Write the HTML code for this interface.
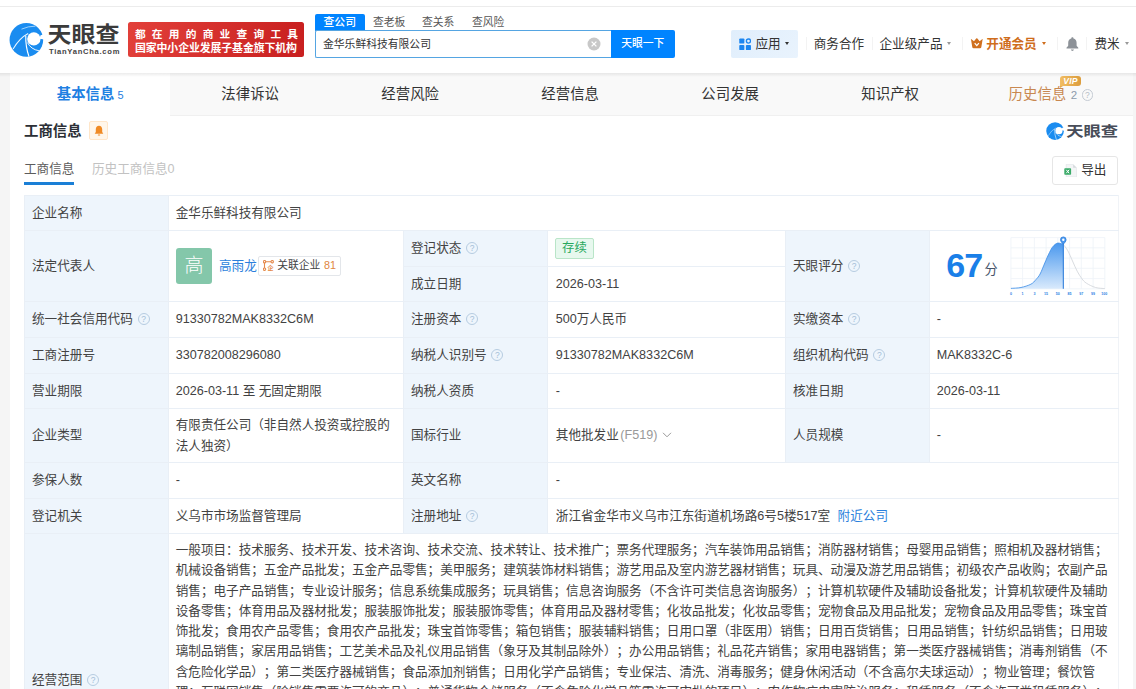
<!DOCTYPE html>
<html lang="zh-CN">
<head>
<meta charset="utf-8">
<title>金华乐鲜科技有限公司 - 天眼查</title>
<style>
*{box-sizing:border-box;margin:0;padding:0}
html,body{width:1136px;height:689px;overflow:hidden;background:#f5f5f5;}
body{position:relative;text-spacing-trim:space-all;font-family:"Liberation Sans","Noto Sans CJK SC",sans-serif;color:#333;font-size:12.6px;}
.abs{position:absolute;white-space:nowrap}
#hdr{position:absolute;left:0;top:0;width:1136px;height:73px;background:#fff;}
#topline{position:absolute;left:0;top:6px;width:1136px;height:1px;background:#ececec}
#hshadow{position:absolute;left:0;top:72.500px;width:1136px;height:4px;background:linear-gradient(rgba(0,0,0,.075),rgba(0,0,0,0));z-index:5}
#card{position:absolute;left:10px;top:73px;width:1122.5px;height:640px;background:#fff}
#tabs{position:absolute;left:0;top:0;width:1122.5px;height:43px;background:#f9f9f9;border-bottom:1px solid #f0f0f0}
.tab{position:absolute;top:0;height:43px;width:160.3px;text-align:center;line-height:43px;font-size:14.4px;color:#333}
.tab.on{background:#fff;color:#1f80e2;font-weight:bold}
.tab .n{font-size:11px;font-weight:normal;margin-left:3px}
table{border-collapse:collapse;position:absolute;left:24px;top:195px;width:1094px;table-layout:fixed}
td{border:1px solid #e9eff6;padding:0 0 0 6.700px;font-size:12.6px;color:#424242;vertical-align:middle;line-height:20.3px;white-space:nowrap}
td.l{background:#eef5fc;padding-left:7px}
.q{display:inline-block;width:12px;height:12px;border:1px solid #b6cce1;border-radius:50%;color:#a3bdd7;font-size:8.500px;line-height:10.200px;text-align:center;vertical-align:middle;margin-left:4.800px;position:relative;top:-1px;font-family:"Liberation Sans",sans-serif}
.blue{color:#2b7fdc}
td.v4{padding-left:7.800px}
tr>td:last-child{border-right-color:#f0f3f7}
.nv{top:33.500px;font-size:12.600px;line-height:20px;color:#333}
.sep{top:37px;width:1px;height:13px;background:#f3f3f3}
.car{top:42px;width:0;height:0;border:2.500px solid transparent;border-top:3px solid #999;border-bottom:none}
</style>
</head>
<body>
<div id="hdr">
  <div id="topline"></div>
  <!-- logo -->
  <svg class="abs" style="left:4px;top:16px" width="50" height="46" viewBox="0 0 749 689">
    <circle cx="335" cy="358" r="252" fill="#1a8cf0"/>
    <circle cx="447" cy="343" r="100" fill="#fff"/>
    <path d="M548 288 L650 262 L604 352 L530 340 Z" fill="#fff"/>
    <path d="M262 197 Q360 152 472 152" stroke="#cfeaff" stroke-width="11" fill="none"/>
    <path d="M362 262 Q232 330 136 494" stroke="#eaf6ff" stroke-width="15" fill="none"/>
    <path d="M326 296 Q322 460 374 606" stroke="#fff" stroke-width="17" fill="none"/>
    <path d="M352 398 Q402 500 528 522" stroke="#fff" stroke-width="14" fill="none"/>
  </svg>
  <div class="abs" style="left:47.5px;top:17.2px;font-size:24px;font-weight:bold;color:#3b3b3b;line-height:32px;transform:scaleY(.9);transform-origin:0 50%;font-family:'Noto Sans CJK SC',sans-serif">天眼查</div>
  <div class="abs" style="left:49px;top:47px;font-size:7.6px;font-weight:bold;color:#444;line-height:10px;letter-spacing:.72px;font-family:'Liberation Sans',sans-serif">TianYanCha.com</div>
  <!-- red banner -->
  <div class="abs" style="left:127.900px;top:21.500px;width:176.600px;height:35.600px;border-radius:2.500px;background:linear-gradient(100deg,#e2403a,#c81f1f);color:#fff;font-weight:bold;">
    <div class="abs" style="left:7px;top:5.400px;font-size:10.700px;line-height:14px;letter-spacing:6.250px">都在用的商业查询工具</div>
    <div class="abs" style="left:7.100px;top:19.500px;font-size:10.9px;line-height:14px;letter-spacing:-.1px">国家中小企业发展子基金旗下机构</div>
  </div>
  <!-- search -->
  <div class="abs" style="left:315px;top:14px;width:49.5px;height:17px;background:#0084ff;border-radius:2px 2px 0 0;color:#fff;font-size:10.8px;line-height:16px;text-align:center;font-weight:500">查公司</div>
  <div class="abs" style="left:373px;top:14px;font-size:10.8px;line-height:16px;color:#555">查老板</div>
  <div class="abs" style="left:422px;top:14px;font-size:10.8px;line-height:16px;color:#555">查关系</div>
  <div class="abs" style="left:472px;top:14px;font-size:10.8px;line-height:16px;color:#555">查风险</div>
  <div class="abs" style="left:315px;top:30px;width:296px;height:27.5px;border:1px solid #55a5e2;border-right:none;border-radius:2px 0 0 2px;background:#fff;font-size:10.8px;line-height:27px;padding-left:7px;color:#333">金华乐鲜科技有限公司</div>
  <svg class="abs" style="left:586.5px;top:36.8px" width="14" height="14" viewBox="0 0 14 14"><circle cx="7" cy="7" r="6.5" fill="#c8c8c8"/><path d="M4.6 4.6L9.4 9.4M9.4 4.6L4.6 9.4" stroke="#fff" stroke-width="1.3"/></svg>
  <div class="abs" style="left:610.5px;top:30px;width:64.5px;height:27.5px;background:#0084ff;border-radius:0 2px 2px 0;color:#fff;font-size:10.8px;line-height:27.5px;text-align:center;font-weight:500">天眼一下</div>
  <!-- nav -->
  <div class="abs" style="left:730.5px;top:29.5px;width:67.5px;height:28.5px;background:linear-gradient(135deg,#e0eefc,#e9f3fd);border-radius:2px"></div>
  <svg class="abs" style="left:738.5px;top:38px" width="12.5" height="12.5" viewBox="0 0 14 14"><rect x="0.3" y="0.5" width="5.7" height="5.7" rx="1" fill="#1a85f0"/><circle cx="10.6" cy="3.4" r="2.3" fill="none" stroke="#1a85f0" stroke-width="1.5"/><rect x="0.3" y="7.8" width="5.7" height="5.700" rx="1" fill="#1a85f0"/><rect x="7.700" y="7.800" width="5.700" height="5.700" rx="1" fill="#1a85f0"/></svg>
  <div class="abs nv" style="left:755.5px">应用</div>
  <div class="abs car" style="left:785px;border-top-color:#333"></div>
  <div class="abs sep" style="left:805.5px"></div>
  <div class="abs nv" style="left:813.7px">商务合作</div>
  <div class="abs sep" style="left:871.5px"></div>
  <div class="abs nv" style="left:879.5px">企业级产品</div>
  <div class="abs car" style="left:947px"></div>
  <div class="abs sep" style="left:961.5px"></div>
  <svg class="abs" style="left:969.8px;top:38px" width="13.6" height="10.6" viewBox="0 0 13.6 10.6"><path d="M1 1.600Q.6.800 1.500 1.300L4 3.300L6.200.6Q6.800-.1 7.400.6L9.600 3.300L12.100 1.300Q13 .8 12.600 1.600L11.300 9.300Q11.100 10.300 10 10.300H3.600Q2.500 10.300 2.300 9.300Z" fill="#d0701f"/><path d="M4.700 5.200L6.800 7.600L8.900 5.200" fill="none" stroke="#fff" stroke-width="1.300"/></svg>
  <div class="abs nv" style="left:986.3px;color:#cf6d1c;font-weight:bold">开通会员</div>
  <div class="abs car" style="left:1041.7px;border-top-color:#cf6d1c"></div>
  <div class="abs sep" style="left:1057.4px"></div>
  <svg class="abs" style="left:1066px;top:36.500px" width="12.800" height="14.200" viewBox="0 0 12.800 14.200"><path d="M6.400 .3C5.700 .3 5.300 .8 5.300 1.400C3.300 1.900 2.200 3.600 2.200 5.700V8.600C2.200 9.500 1.200 10 .5 10.700V11.500H12.300V10.700C11.600 10 10.600 9.500 10.600 8.600V5.700C10.600 3.600 9.500 1.900 7.500 1.400C7.500 .8 7.100 .3 6.400 .3Z" fill="#8d9298"/><path d="M4.800 12.500H8Q7.600 13.900 6.400 13.900Q5.200 13.900 4.800 12.500Z" fill="#8d9298"/></svg>
  <div class="abs sep" style="left:1086.400px"></div>
  <div class="abs nv" style="left:1094.400px">费米</div>
  <div class="abs car" style="left:1125px"></div>
</div>
<div id="hshadow"></div>
<div id="card">
  <div id="tabs">
    <div class="tab on" style="left:0">基本信息<span class="n">5</span></div>
    <div class="tab" style="left:160px">法律诉讼</div>
    <div class="tab" style="left:320px">经营风险</div>
    <div class="tab" style="left:480px">经营信息</div>
    <div class="tab" style="left:640px">公司发展</div>
    <div class="tab" style="left:800px">知识产权</div>
    <div class="tab" style="left:960px;color:#c88850;text-align:left;padding-left:38.600px">历史信息<span class="n" style="color:#8d9bab;margin-left:4.500px;font-size:11.500px">2</span><span class="q" style="width:11.700px;height:11.700px;line-height:10px;font-size:8.500px;border-color:#c4cbd3;color:#b5bdc6;margin-left:4.500px;top:-.5px">?</span>
      <div class="abs" style="left:89.900px;top:2.500px;width:21.200px;height:10.200px;border-radius:3px 3px 3px 0;background:linear-gradient(90deg,#f2bd62,#dc9d3e);color:#fff;font-size:8.600px;line-height:10.200px;font-weight:bold;font-style:italic;text-align:center;font-family:'Liberation Sans',sans-serif;letter-spacing:.2px">VIP</div>
      <div class="abs" style="left:89.900px;top:12.500px;width:0;height:0;border-top:2.500px solid #e5aa4c;border-right:3px solid transparent"></div>
    </div>
  </div>
</div>
<!-- section title -->
<div class="abs" style="left:24px;top:120px;font-size:14.4px;font-weight:bold;line-height:22px;color:#2b2f36">工商信息</div>
<div class="abs" style="left:89px;top:121px;width:19px;height:19px;background:#fff6ea;border:1px solid #ffe6c9;border-radius:2px"></div>
<svg class="abs" style="left:93.500px;top:124.500px" width="10" height="12" viewBox="0 0 10 12"><path d="M5 .8C3 .8 1.800 2.400 1.800 4.300V7L.7 8.800h8.600L8.200 7V4.300C8.200 2.400 7 .8 5 .8Z" fill="#f08a24"/><rect x="3.800" y="9.500" width="2.400" height="1.100" rx=".5" fill="#f08a24"/></svg>
<!-- sub tabs -->
<div class="abs" style="left:24px;top:158.700px;font-size:12.6px;line-height:20px;color:#5c5c5c">工商信息</div>
<div class="abs" style="left:92px;top:158.700px;font-size:12.6px;line-height:20px;color:#c2c2c2">历史工商信息0</div>
<div class="abs" style="left:24px;top:182px;width:50px;height:3px;background:#1a7fd6"></div>
<!-- export -->
<div class="abs" style="left:1052px;top:156px;width:66px;height:28.500px;border:1px solid #e6e6e6;border-radius:3px;background:#fff"></div>
<svg class="abs" style="left:1063.500px;top:163.800px" width="13" height="13.400" viewBox="0 0 13 13.400"><path d="M2.200 .4h7l3.300 3.300v9.300H2.200Z" fill="#f3f5f6" stroke="#dfe3e6" stroke-width=".6"/><path d="M9.200 .4V3.700H12.500Z" fill="#d5dadd"/><rect x=".3" y="4.200" width="6.800" height="6.600" rx=".8" fill="#3aaa68"/><path d="M2.300 5.800L5.100 9.200M5.100 5.800L2.300 9.200" stroke="#fff" stroke-width="1"/></svg>
<div class="abs" style="left:1081.200px;top:160px;font-size:12.6px;line-height:20px;color:#333">导出</div>
<!-- watermark logo -->
<svg class="abs" style="left:1046px;top:122px" width="18.200" height="18.200" viewBox="75 98 520 520">
    <circle cx="335" cy="358" r="252" fill="#1a8cf0"/>
    <circle cx="445" cy="345" r="102" fill="#fff"/>
    <path d="M540 262 L640 250 L600 352 L520 330 Z" fill="#fff"/>
    <path d="M356 268 Q230 330 138 492" stroke="#e6f5ff" stroke-width="14" fill="none"/>
    <path d="M322 300 Q318 460 372 604" stroke="#fff" stroke-width="16" fill="none"/>
    <path d="M350 400 Q400 500 525 520" stroke="#fff" stroke-width="14" fill="none"/>
</svg>
<div class="abs" style="left:1066.200px;top:117px;font-size:17.300px;font-weight:bold;color:#484d59;line-height:26px;transform:scaleY(.82);transform-origin:0 50%;font-family:'Noto Sans CJK SC',sans-serif">天眼查</div>

<svg class="abs" style="left:1000px;top:230px" width="115" height="70" viewBox="1000 230 115 70">
  <defs><linearGradient id="gf" x1="0" y1="0" x2="0" y2="1"><stop offset="0" stop-color="#4a98ee"/><stop offset="1" stop-color="#d9eafc"/></linearGradient></defs>
  <path d="M1010.9 237.6V288.8M1022.6 237.6V288.8M1034.4 237.6V288.8M1046.1 237.6V288.8M1057.8 237.6V288.8M1069.6 237.6V288.8M1081.3 237.6V288.8M1093.1 237.6V288.8M1104.8 237.6V288.8M1010.9 237.6H1104.8M1010.9 247.8H1104.8M1010.9 258.1H1104.8M1010.9 268.3H1104.8M1010.9 278.6H1104.8M1010.9 288.8H1104.8" stroke="#edf2f8" stroke-width=".8" fill="none"/>
  <path d="M1010.9 288.4C1012.6 288.2 1017.7 288.2 1021.0 287.5C1024.3 286.8 1028.4 285.5 1030.9 284.2C1033.4 282.9 1034.5 281.2 1036.0 279.5C1037.5 277.8 1038.6 276.8 1040.1 274.0C1041.6 271.2 1043.2 266.6 1044.8 263.0C1046.3 259.4 1048.0 255.4 1049.4 252.7C1050.8 249.9 1051.6 248.1 1053.0 246.5C1054.4 244.9 1056.0 243.4 1057.7 243.1C1059.4 242.8 1062.4 244.2 1063.3 244.4V288.8H1010.9Z" fill="url(#gf)"/>
  <path d="M1010.9 288.4C1012.6 288.2 1017.7 288.2 1021.0 287.5C1024.3 286.8 1028.4 285.5 1030.9 284.2C1033.4 282.9 1034.5 281.2 1036.0 279.5C1037.5 277.8 1038.6 276.8 1040.1 274.0C1041.6 271.2 1043.2 266.6 1044.8 263.0C1046.3 259.4 1048.0 255.4 1049.4 252.7C1050.8 249.9 1051.6 248.1 1053.0 246.5C1054.4 244.9 1056.0 243.4 1057.7 243.1C1059.4 242.8 1062.4 244.2 1063.3 244.4" fill="none" stroke="#3a8be6" stroke-width=".8"/>
  <path d="M1063.3 244.4C1064.1 245.5 1066.4 248.1 1067.9 250.9C1069.4 253.7 1071.0 257.6 1072.5 261.0C1074.0 264.4 1075.7 268.3 1077.2 271.2C1078.8 274.1 1080.3 276.6 1081.8 278.6C1083.3 280.6 1084.1 281.7 1086.4 283.2C1088.7 284.7 1092.5 286.6 1095.6 287.5C1098.7 288.4 1103.3 288.4 1104.8 288.6" fill="none" stroke="#cfd3d8" stroke-width=".8"/>
  <path d="M1063.3 243V288.8" stroke="#1f74d8" stroke-width="1"/>
  <path d="M1063.3 244.2C1061.800 242.600 1060.500 241.300 1060.500 239.700A2.800 2.800 0 0 1 1066.100 239.700C1066.100 241.300 1064.800 242.600 1063.300 244.200Z" fill="#4a98ee" stroke="#1f74d8" stroke-width=".7"/>
  <circle cx="1063.3" cy="239.700" r="1.200" fill="#fff"/>
  <g font-size="3.600" fill="#2a82e4" font-family="Liberation Sans, sans-serif" font-weight="bold" text-anchor="middle"><text x="1010.9" y="294.6">0</text><text x="1022.6" y="294.6">1</text><text x="1034.4" y="294.6">3</text><text x="1046.1" y="294.6">15</text><text x="1057.8" y="294.6">50</text><text x="1069.6" y="294.6">85</text><text x="1081.3" y="294.6">97</text><text x="1093.1" y="294.6">99</text><text x="1104.3" y="294.6">100</text></g>
</svg>
<table>
<colgroup><col style="width:144px"><col style="width:235px"><col style="width:144px"><col style="width:238px"><col style="width:144px"><col style="width:189px"></colgroup>
<tr style="height:35px"><td class="l">企业名称</td><td colspan="5">金华乐鲜科技有限公司</td></tr>
<tr style="height:36px"><td class="l" rowspan="2">法定代表人</td><td rowspan="2" style="position:relative">
  <div class="abs" style="left:7px;top:17px;width:36px;height:36px;border-radius:3px;background:#84c7aa;color:#fff;font-size:19px;font-weight:300;line-height:35px;text-align:center">高</div>
  <div class="abs blue" style="left:50px;top:25px;line-height:20px">高雨龙</div>
  <div class="abs" style="left:89.200px;top:24.900px;width:82.500px;height:19.700px;border:1px solid #e3e6ea;border-radius:2px;font-size:10.8px;line-height:17.700px;color:#444;padding-left:18px">关联企业<span style="color:#e08540;margin-left:3.500px">81</span></div>
  <svg class="abs" style="left:93.500px;top:28.800px" width="11" height="11.500" viewBox="0 0 11 11.500"><g fill="none" stroke="#e58a4c" stroke-width="1.100"><circle cx="1.500" cy="1.700" r="1.200"/><circle cx="9.200" cy="1.700" r="1.200"/><circle cx="1.500" cy="9.200" r="1.200"/><path d="M2.600 1.700H8.100M1.500 2.800V8.100"/></g><text x="4.600" y="10.400" font-size="6" fill="#e58a4c" font-family="Noto Sans CJK SC, sans-serif" font-weight="bold">企</text></svg>
  </td><td class="l">登记状态<span class="q">?</span></td><td class="v4"><span style="display:inline-block;height:20.500px;line-height:18.500px;border:1px solid #b9e5c8;background:#e7f8ee;color:#27a85e;padding:0 5.800px;border-radius:2px;font-size:12.400px;position:relative;left:-.5px">存续</span></td><td class="l" rowspan="2">天眼评分<span class="q">?</span></td><td rowspan="2" style="position:relative">
  <div class="abs" style="left:16.300px;top:14.300px;font-size:34px;font-weight:bold;color:#1a7fe8;line-height:40px;letter-spacing:-1px;font-family:'Liberation Sans',sans-serif">67</div>
  <div class="abs" style="left:54.500px;top:29.500px;font-size:13.200px;color:#46546a;line-height:18px">分</div>
  </td></tr>
<tr style="height:35px"><td class="l">成立日期</td><td class="v4">2026-03-11</td></tr>
<tr style="height:36px"><td class="l">统一社会信用代码<span class="q">?</span></td><td>91330782MAK8332C6M</td><td class="l">注册资本<span class="q">?</span></td><td class="v4">500万人民币</td><td class="l">实缴资本<span class="q">?</span></td><td>-</td></tr>
<tr style="height:36px"><td class="l">工商注册号</td><td>330782008296080</td><td class="l">纳税人识别号<span class="q">?</span></td><td class="v4">91330782MAK8332C6M</td><td class="l">组织机构代码<span class="q">?</span></td><td>MAK8332C-6</td></tr>
<tr style="height:35px"><td class="l">营业期限</td><td>2026-03-11 至 无固定期限</td><td class="l">纳税人资质</td><td class="v4">-</td><td class="l">核准日期</td><td>2026-03-11</td></tr>
<tr style="height:54px"><td class="l">企业类型</td><td style="white-space:normal">有限责任公司（非自然人投资或控股的<br>法人独资）</td><td class="l">国标行业</td><td class="v4">其他批发业<span style="color:#999;margin-left:1.500px">(F519)</span> <svg width="10" height="6" viewBox="0 0 9 6" style="margin-left:1.500px;vertical-align:1px"><path d="M.5.8L4.500 4.800L8.500.8" fill="none" stroke="#999" stroke-width="1"/></svg></td><td class="l">人员规模</td><td>-</td></tr>
<tr style="height:36px"><td class="l">参保人数</td><td>-</td><td class="l">英文名称</td><td class="v4" colspan="3">-</td></tr>
<tr style="height:35px"><td class="l">登记机关</td><td>义乌市市场监督管理局</td><td class="l">注册地址<span class="q">?</span></td><td class="v4" colspan="3">浙江省金华市义乌市江东街道机场路6号5楼517室 <span class="blue" style="margin-left:4px">附近公司</span></td></tr>
<tr style="height:294px"><td class="l">经营范围<span class="q">?</span></td><td colspan="5" style="vertical-align:top;padding-top:6px">
<div>一般项目：技术服务、技术开发、技术咨询、技术交流、技术转让、技术推广；票务代理服务；汽车装饰用品销售；消防器材销售；母婴用品销售；照相机及器材销售；</div>
<div>机械设备销售；五金产品批发；五金产品零售；美甲服务；建筑装饰材料销售；游艺用品及室内游艺器材销售；玩具、动漫及游艺用品销售；初级农产品收购；农副产品</div>
<div>销售；电子产品销售；专业设计服务；信息系统集成服务；玩具销售；信息咨询服务（不含许可类信息咨询服务）；计算机软硬件及辅助设备批发；计算机软硬件及辅助</div>
<div>设备零售；体育用品及器材批发；服装服饰批发；服装服饰零售；体育用品及器材零售；化妆品批发；化妆品零售；宠物食品及用品批发；宠物食品及用品零售；珠宝首</div>
<div>饰批发；食用农产品零售；食用农产品批发；珠宝首饰零售；箱包销售；服装辅料销售；日用口罩（非医用）销售；日用百货销售；日用品销售；针纺织品销售；日用玻</div>
<div>璃制品销售；家居用品销售；工艺美术品及礼仪用品销售（象牙及其制品除外）；办公用品销售；礼品花卉销售；家用电器销售；第一类医疗器械销售；消毒剂销售（不</div>
<div>含危险化学品）；第二类医疗器械销售；食品添加剂销售；日用化学产品销售；专业保洁、清洗、消毒服务；健身休闲活动（不含高尔夫球运动）；物业管理；餐饮管</div>
<div>理；互联网销售（除销售需要许可的商品）；普通货物仓储服务（不含危险化学品等需许可审批的项目）；农作物病虫害防治服务；租赁服务（不含许可类租赁服务）；</div>
</td></tr>
</table>
</body>
</html>
